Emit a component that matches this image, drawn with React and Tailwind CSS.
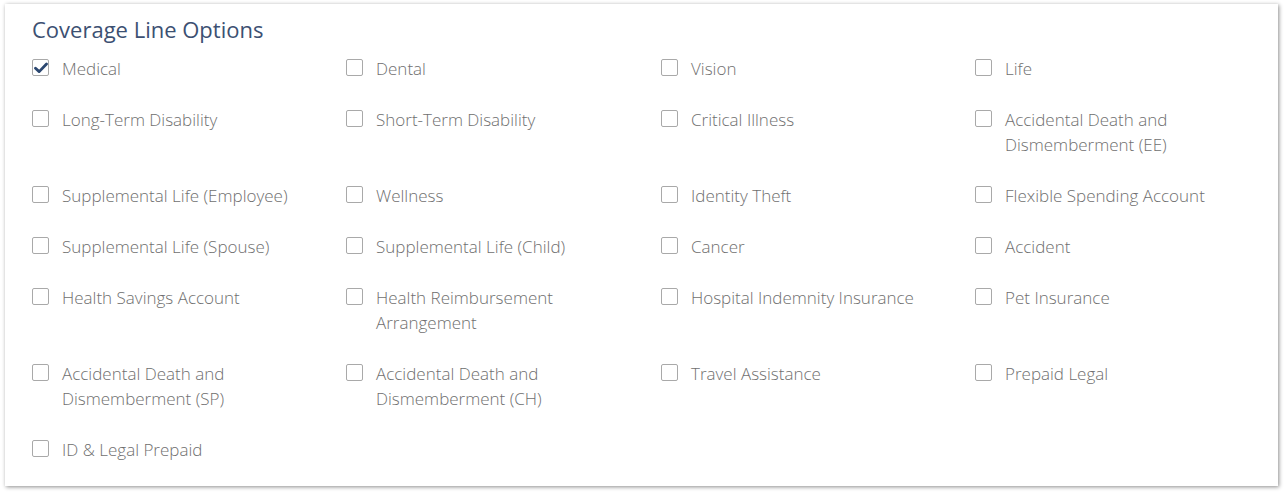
import React, { useState } from 'react';

const OPTIONS = [
  'Medical',
  'Dental',
  'Vision',
  'Life',
  'Long-Term Disability',
  'Short-Term Disability',
  'Critical Illness',
  'Accidental Death and Dismemberment (EE)',
  'Supplemental Life (Employee)',
  'Wellness',
  'Identity Theft',
  'Flexible Spending Account',
  'Supplemental Life (Spouse)',
  'Supplemental Life (Child)',
  'Cancer',
  'Accident',
  'Health Savings Account',
  'Health Reimbursement Arrangement',
  'Hospital Indemnity Insurance',
  'Pet Insurance',
  'Accidental Death and Dismemberment (SP)',
  'Accidental Death and Dismemberment (CH)',
  'Travel Assistance',
  'Prepaid Legal',
  'ID & Legal Prepaid',
];

const Checkbox = ({ label, checked, onToggle }) => (
  <label className="flex items-start gap-[13px] cursor-pointer">
    <span className="mt-[3px] w-[17px] h-[17px] shrink-0 border border-[#a9a9a9] rounded-[2px] bg-white flex items-center justify-center">
      {checked && (
        <svg width="14" height="12" viewBox="0 0 14 12">
          <path d="M1.5 6.2 L5.2 9.6 L12.5 2" fill="none" stroke="#2b4770" strokeWidth="2.8" strokeLinecap="round" strokeLinejoin="round" />
        </svg>
      )}
    </span>
    <span className="text-[17px] leading-[25px] font-light text-[#6f6f6f] max-w-[240px]" onClick={onToggle}>
      {label}
    </span>
  </label>
);

export default function App() {
  const [checked, setChecked] = useState({ Medical: true });

  return (
    <div className="min-h-screen bg-white pt-[4px] pl-[5px] pr-[8px]" style={{ fontFamily: '"Open Sans", sans-serif' }}>
      <div className="bg-white shadow-[1px_1px_4px_rgba(0,0,0,0.45)] pl-[27px] pt-[13px] pb-[24px]">
        <h2 className="text-[22px] leading-[25px] text-[#3c5072] mb-[14px]">Coverage Line Options</h2>
        <div className="grid grid-cols-[314px_315px_314px_1fr] gap-y-[26px]">
          {OPTIONS.map((opt) => (
            <Checkbox
              key={opt}
              label={opt}
              checked={!!checked[opt]}
              onToggle={() => setChecked((c) => ({ ...c, [opt]: !c[opt] }))}
            />
          ))}
        </div>
      </div>
    </div>
  );
}
